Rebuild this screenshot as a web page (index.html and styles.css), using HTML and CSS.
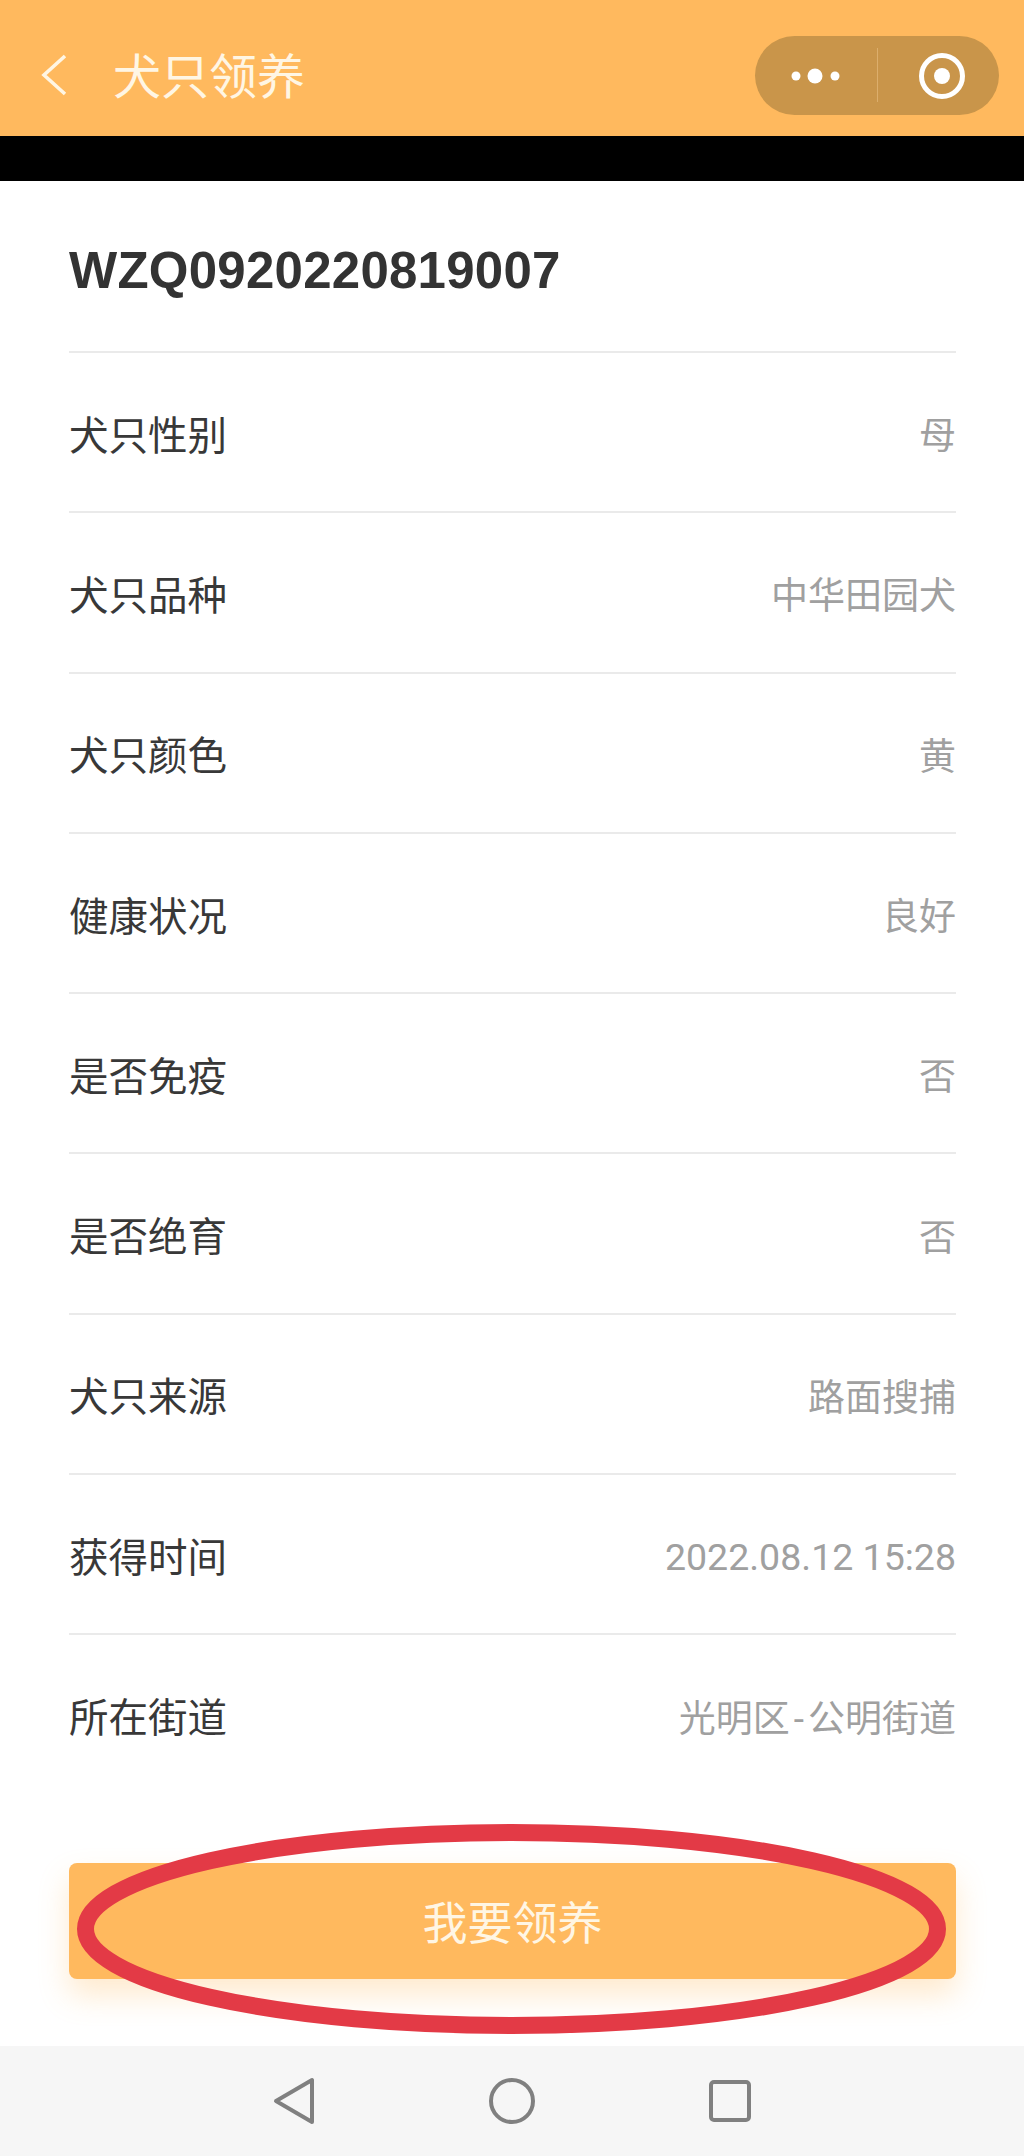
FILE: index.html
```html
<!DOCTYPE html>
<html lang="zh-CN">
<head>
    <meta charset="UTF-8">
    <meta name="viewport" content="width=device-width, initial-scale=1.0">
    <title>犬只领养</title>
    <link rel="stylesheet" href="styles.css">
</head>
<body>
    <header class="topbar">
        <svg class="back" width="26" height="42" viewBox="0 0 26 42">
            <path d="M24 2 L3 21 L24 40" fill="none" stroke="#fff6e4" stroke-width="3.6"/>
        </svg>
        <div class="topbar-title">犬只领养</div>
        <div class="capsule">
            <svg class="capsule-more" width="122" height="79" viewBox="0 0 122 79">
                <circle cx="41" cy="40" r="4.5" fill="#fff"/>
                <circle cx="60" cy="40" r="7.5" fill="#fff"/>
                <circle cx="80" cy="40" r="4.5" fill="#fff"/>
            </svg>
            <div class="capsule-line"></div>
            <svg class="capsule-close" width="121" height="79" viewBox="0 0 121 79">
                <circle cx="64" cy="40" r="20.5" fill="none" stroke="#fff" stroke-width="5"/>
                <circle cx="64" cy="40" r="8" fill="#fff"/>
            </svg>
        </div>
    </header>
    <div class="blackbar"></div>

    <main class="content">
        <h1 class="dog-no">WZQ0920220819007</h1>
        <div class="row"><span class="label">犬只性别</span><span class="value">母</span></div>
        <div class="row"><span class="label">犬只品种</span><span class="value">中华田园犬</span></div>
        <div class="row"><span class="label">犬只颜色</span><span class="value">黄</span></div>
        <div class="row"><span class="label">健康状况</span><span class="value">良好</span></div>
        <div class="row"><span class="label">是否免疫</span><span class="value">否</span></div>
        <div class="row"><span class="label">是否绝育</span><span class="value">否</span></div>
        <div class="row"><span class="label">犬只来源</span><span class="value">路面搜捕</span></div>
        <div class="row"><span class="label">获得时间</span><span class="value value-date">2022.08.12 15:28</span></div>
        <div class="row"><span class="label">所在街道</span><span class="value">光明区<span class="value-dash">-</span>公明街道</span></div>

        <div class="adopt-wrap">
            <button class="adopt">我要领养</button>
            <svg class="circle-mark" width="890" height="212" viewBox="0 0 890 212">
                <ellipse cx="445.5" cy="106" rx="426" ry="96.5" fill="none" stroke="#e33a46" stroke-width="17"/>
            </svg>
        </div>
    </main>

    <nav class="navbar">
        <svg width="44" height="50" viewBox="0 0 44 50">
            <path d="M40 4 L40 46 L4 25 Z" fill="none" stroke="#808080" stroke-width="4" stroke-linejoin="round"/>
        </svg>
        <svg width="50" height="50" viewBox="0 0 50 50">
            <circle cx="25" cy="25" r="21" fill="none" stroke="#808080" stroke-width="4"/>
        </svg>
        <svg width="44" height="44" viewBox="0 0 44 44">
            <rect x="3" y="3" width="38" height="38" rx="3" fill="none" stroke="#808080" stroke-width="4"/>
        </svg>
    </nav>
</body>
</html>
```

FILE: styles.css
```css
* {
    box-sizing: border-box;
}
body {
    margin: 0;
    height: 2156px;
    display: flex;
    flex-direction: column;
    background: #fff;
    font-family: "Liberation Sans", "Noto Sans CJK SC", sans-serif;
    overflow: hidden;
}
.topbar {
    height: 136px;
    flex: none;
    display: flex;
    align-items: center;
    padding: 14px 25px 0 41px;
    background: #ffb95e;
}
.back {
    flex: none;
    margin-right: 46px;
}
.topbar-title {
    flex: 1;
    margin-top: -4px;
    font-size: 48px;
    color: #fff6e4;
}
.capsule {
    width: 244px;
    height: 79px;
    flex: none;
    display: flex;
    align-items: center;
    border-radius: 40px;
    background: #c9954a;
}
.capsule-line {
    width: 1px;
    height: 54px;
    background: #dcae6c;
}
.blackbar {
    height: 45px;
    flex: none;
    background: #000;
}
.content {
    flex: 1;
    padding: 0 68px 0 69px;
}
.dog-no {
    height: 170px;
    margin: 0;
    display: flex;
    align-items: center;
    padding-top: 8px;
    font-size: 51px;
    letter-spacing: 0.25px;
    font-weight: bold;
    color: #333;
}
.row {
    height: 160.3px;
    display: flex;
    align-items: center;
    justify-content: space-between;
    border-top: 2px solid #eaeaea;
}
.label {
    font-size: 39.5px;
    color: #383838;
}
.value {
    padding-top: 2px;
    font-family: Roboto, "Noto Sans CJK SC", sans-serif;
    font-size: 37px;
    color: #a0a0a0;
}
.value-date {
    padding-top: 5px;
    font-size: 37.5px;
}
.value-dash {
    margin: 0 4px;
}
.adopt-wrap {
    position: relative;
    margin-top: 69px;
}
.adopt {
    display: block;
    width: 100%;
    height: 116px;
    border: none;
    border-radius: 8px;
    padding: 0;
    background: #ffb95e;
    box-shadow: 0 16px 30px rgba(255, 185, 94, 0.3);
    font-family: inherit;
    font-size: 45px;
    color: #fff6e4;
}
.circle-mark {
    position: absolute;
    left: -3px;
    top: -40px;
}
.navbar {
    height: 110px;
    flex: none;
    display: flex;
    align-items: center;
    justify-content: center;
    gap: 171px;
    background: #f6f6f6;
}
```
